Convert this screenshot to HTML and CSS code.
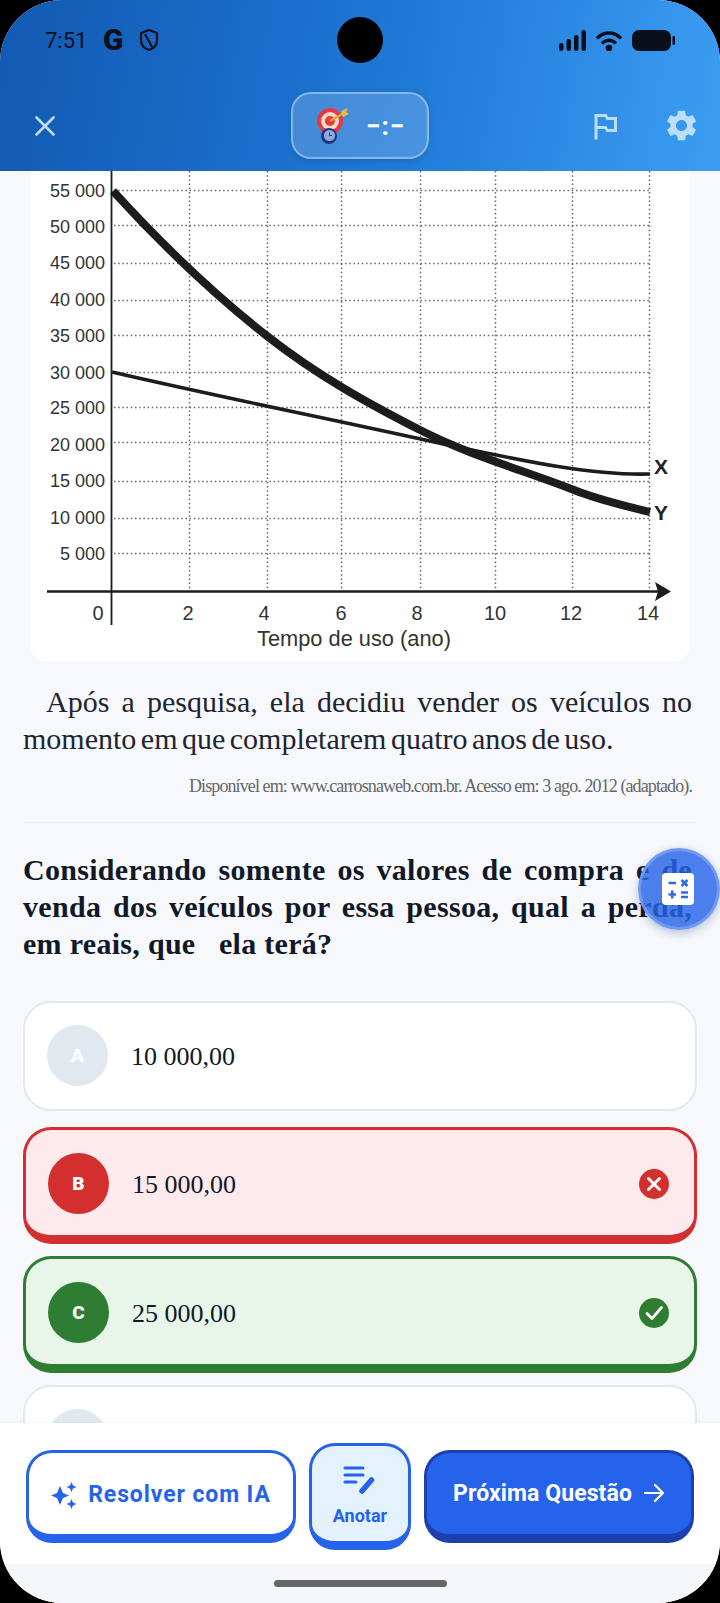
FILE: index.html
```html
<!DOCTYPE html>
<html lang="pt-BR">
<head>
  <meta charset="UTF-8">
  <meta name="viewport" content="width=device-width, initial-scale=1.0">
  <title>Questão</title>
  <link rel="stylesheet" href="styles.css">
</head>
<body>
  <div class="phone">
    <div class="punch-hole"></div>

    <header class="header">
      <div class="status-bar">
        <div class="status-left">
          <span class="time">7:51</span>
          <span class="g-logo">G</span>
          <svg class="shield" width="20" height="24" viewBox="0 0 20 24" fill="none" stroke="#0a0f1c" stroke-width="2.2" stroke-linejoin="round">
            <path d="M10 2 L18 5 V12 C18 17 14.5 20.5 10 22 C5.5 20.5 2 17 2 12 V5 Z"/>
            <path d="M6 6 L13 19"/>
          </svg>
        </div>
        <div class="status-right">
          <svg width="27" height="21" viewBox="0 0 27 21" fill="#0a0f1c">
            <rect x="0" y="13" width="4.5" height="8" rx="2.2"/>
            <rect x="7.5" y="9" width="4.5" height="12" rx="2.2"/>
            <rect x="15" y="5" width="4.5" height="16" rx="2.2"/>
            <rect x="22.5" y="0" width="4.5" height="21" rx="2.2"/>
          </svg>
          <svg width="26" height="21" viewBox="0 0 26 21" fill="none" stroke="#0a0f1c" stroke-width="3.4" stroke-linecap="round">
            <path d="M2 7.5 C8 1.5 18 1.5 24 7.5"/>
            <path d="M7 12.5 C10.5 9.5 15.5 9.5 19 12.5"/>
            <circle cx="13" cy="18" r="1.6" fill="#0a0f1c"/>
          </svg>
          <svg width="43" height="21" viewBox="0 0 43 21" fill="#0a0f1c">
            <rect x="0" y="0" width="39" height="21" rx="7"/>
            <rect x="40.5" y="6" width="2.5" height="9" rx="1.2"/>
          </svg>
        </div>
      </div>

      <div class="toolbar">
        <svg class="close-icon" width="20" height="20" viewBox="0 0 20 20" stroke="#bbdefb" stroke-width="2.6" stroke-linecap="round">
          <path d="M1.5 1.5 L18.5 18.5 M18.5 1.5 L1.5 18.5"/>
        </svg>
        <div class="timer-pill">
          <svg width="36" height="40" viewBox="0 0 36 40">
            <circle cx="15" cy="15" r="13" fill="#e53945"/>
            <circle cx="15" cy="15" r="9" fill="#f7dcc0"/>
            <circle cx="15" cy="15" r="5" fill="#e53945"/>
            <path d="M15 15 L29 7" stroke="#f0a030" stroke-width="2.4"/>
            <path d="M26 5 L33 2 L31 6 L34 8 L28 11 Z" fill="#f5b83d"/>
            <circle cx="14" cy="30" r="8" fill="#1d3a80"/>
            <circle cx="14.5" cy="29.5" r="5.6" fill="#8fa8e0"/>
            <path d="M14.5 26.5 V29.5 H17" fill="none" stroke="#1d3a80" stroke-width="1"/>
          </svg>
          <span class="timer-text">−:−</span>
        </div>
        <div class="toolbar-right">
          <svg width="36" height="36" viewBox="0 0 24 24" fill="#bbdefb">
            <path d="M14 6l-1-2H5v17h2v-7h5l1 2h7V6h-6zm4 8h-4l-1-2H7V6h5l1 2h5v6z"/>
          </svg>
          <svg width="37" height="37" viewBox="0 0 24 24" fill="#bbdefb">
            <path d="M19.14 12.94c.04-.3.06-.61.06-.94 0-.32-.02-.64-.07-.94l2.03-1.58a.49.49 0 0 0 .12-.61l-1.92-3.32a.488.488 0 0 0-.59-.22l-2.39.96c-.5-.38-1.03-.7-1.62-.94l-.36-2.54a.484.484 0 0 0-.48-.41h-3.84c-.24 0-.43.17-.47.41l-.36 2.54c-.59.24-1.13.57-1.62.94l-2.39-.96c-.22-.08-.47 0-.59.22L2.74 8.87c-.12.21-.08.47.12.61l2.03 1.58c-.05.3-.09.63-.09.94s.02.64.07.94l-2.03 1.58a.49.49 0 0 0-.12.61l1.92 3.32c.12.22.37.29.59.22l2.39-.96c.5.38 1.03.7 1.62.94l.36 2.54c.05.24.24.41.48.41h3.84c.24 0 .44-.17.47-.41l.36-2.54c.59-.24 1.13-.56 1.62-.94l2.39.96c.22.08.47 0 .59-.22l1.92-3.32c.12-.22.07-.47-.12-.61l-2.01-1.58zM12 15.6c-1.98 0-3.6-1.62-3.6-3.6s1.62-3.6 3.6-3.6 3.6 1.62 3.6 3.6-1.62 3.6-3.6 3.6z"/>
          </svg>
        </div>
      </div>
    </header>

    <main class="content">
      <div class="chart-card">
        <svg class="chart" width="660" height="490" viewBox="30 171 660 490">
          <g class="grid">
            <path d="M114 190.5H649 M114 225.5H649 M114 263.5H649 M114 300.5H649 M114 335.5H649 M114 372.5H649 M114 407.5H649 M114 442.5H649 M114 481.5H649 M114 518.5H649 M114 553.5H649"/>
            <path d="M189.5 171V590 M267.5 171V590 M341.5 171V590 M420.5 171V590 M495.5 171V590 M572.5 171V590 M649.5 171V590"/>
          </g>
          <path class="axis" d="M111.5 171V625"/>
          <path class="axis-x" d="M47 591.5H662"/>
          <path class="axis-head" d="M655 582 L671 591.5 L655 601 L658 591.5 Z"/>
          <path class="curve-x" d="M112 372 C 224 398,336 420,448 445 C 515 459,590 476,650 474"/>
          <path class="curve-y" d="M113 191 C 164 247,216 296,267 336 C 318 376,369 404,420 430 C 471 456,523 470,574 490 C 599 500,625 506,650 512"/>
          <g class="chart-y">
            <text x="105" y="196.500">55 000</text>
            <text x="105" y="233">50 000</text>
            <text x="105" y="268.500">45 000</text>
            <text x="105" y="305.500">40 000</text>
            <text x="105" y="342">35 000</text>
            <text x="105" y="379">30 000</text>
            <text x="105" y="414">25 000</text>
            <text x="105" y="450.500">20 000</text>
            <text x="105" y="487">15 000</text>
            <text x="105" y="524">10 000</text>
            <text x="105" y="559.500">5 000</text>
          </g>
          <g class="chart-x">
            <text x="98" y="620">0</text>
            <text x="188" y="620">2</text>
            <text x="264" y="620">4</text>
            <text x="341" y="620">6</text>
            <text x="417" y="620">8</text>
            <text x="495" y="620">10</text>
            <text x="571" y="620">12</text>
            <text x="648" y="620">14</text>
          </g>
          <text class="chart-title" x="354" y="646">Tempo de uso (ano)</text>
          <text class="chart-tag" x="654" y="474">X</text>
          <text class="chart-tag" x="654" y="520">Y</text>
        </svg>
      </div>

      <div class="text-block">
        <p class="paragraph">Após a pesquisa, ela decidiu vender os veículos no momento em que completarem quatro anos de uso.</p>
        <p class="source">Disponível em: www.carrosnaweb.com.br. Acesso em: 3 ago. 2012 (adaptado).</p>
      </div>

      <div class="divider"></div>

      <p class="question">Considerando somente os valores de compra e de venda dos veículos por essa pessoa, qual a perda, em reais, que&nbsp;&nbsp;&nbsp;ela terá?</p>

      <div class="options">
        <div class="option plain">
          <span class="letter">A</span>
          <span class="option-text">10 000,00</span>
        </div>
        <div class="option wrong">
          <span class="letter">B</span>
          <span class="option-text">15 000,00</span>
          <svg class="result-icon" width="30" height="30" viewBox="0 0 30 30">
            <circle cx="15" cy="15" r="15" fill="#d32f2f"/>
            <path d="M9.500 9.500 L20.500 20.500 M20.500 9.500 L9.500 20.500" stroke="#fff" stroke-width="3" stroke-linecap="round"/>
          </svg>
        </div>
        <div class="option right">
          <span class="letter">C</span>
          <span class="option-text">25 000,00</span>
          <svg class="result-icon" width="30" height="30" viewBox="0 0 30 30">
            <circle cx="15" cy="15" r="15" fill="#2e7d32"/>
            <path d="M8 15.500 L13 20.500 L22.500 9.500" fill="none" stroke="#fff" stroke-width="2.800" stroke-linecap="round" stroke-linejoin="round"/>
          </svg>
        </div>
        <div class="option plain">
          <span class="letter"></span>
        </div>
      </div>
    </main>

    <button class="calc-fab">
      <svg width="32" height="32" viewBox="0 0 32 32">
        <rect width="32" height="32" rx="4" fill="#fff"/>
        <path class="calc-glyph" d="M6.500 10H14 M19.500 7 L25.500 13 M25.500 7 L19.500 13 M10.250 17.500V25.500 M6.500 21.500H14 M19 19.500H26 M19 24H26"/>
      </svg>
    </button>

    <div class="bottom-bar">
      <button class="btn btn-ai">
        <svg width="26" height="28" viewBox="0 0 26 28" fill="#2563eb">
          <path d="M9 5 L12 12 L18 14.500 L12 17 L9 24 L6 17 L0 14.500 L6 12 Z"/>
          <path d="M20.500 1 L22 4.500 L25.500 6 L22 7.500 L20.500 11 L19 7.500 L15.500 6 L19 4.500 Z"/>
          <path d="M20.500 18 L22 21.500 L25.500 23 L22 24.500 L20.500 28 L19 24.500 L15.500 23 L19 21.500 Z"/>
        </svg>
        Resolver com IA
      </button>
      <button class="btn btn-note">
        <svg width="34" height="32" viewBox="0 0 34 32" fill="none" stroke="#2563eb" stroke-linecap="round">
          <path d="M2 3H20 M2 10H20 M2 17H13" stroke-width="3"/>
          <path d="M19 26 L28.500 15" stroke-width="5.500"/>
        </svg>
        <span>Anotar</span>
      </button>
      <button class="btn btn-next">
        Próxima Questão
        <svg width="22" height="22" viewBox="0 0 22 22" fill="none" stroke="#fff" stroke-width="2.200" stroke-linecap="round" stroke-linejoin="round">
          <path d="M2 11H20 M12 3 L20 11 L12 19"/>
        </svg>
      </button>
    </div>

    <div class="nav-strip">
      <div class="home-bar"></div>
    </div>
  </div>
</body>
</html>
```

FILE: styles.css
```css
* {
  margin: 0;
  padding: 0;
  box-sizing: border-box;
}

body {
  background: #000;
  width: 720px;
  height: 1603px;
  overflow: hidden;
  font-family: 'Liberation Serif', serif;
}

.phone {
  position: relative;
  width: 720px;
  height: 1603px;
  background: #f6f8fc;
  border-radius: 62px;
  overflow: hidden;
  display: flex;
  flex-direction: column;
}

.punch-hole {
  position: absolute;
  left: 337px;
  top: 17px;
  width: 46px;
  height: 46px;
  border-radius: 50%;
  background: #000;
  z-index: 3;
}

.header {
  height: 171px;
  flex-shrink: 0;
  background: linear-gradient(100deg, #1259b2 0%, #1f78d6 55%, #3c9df2 100%);
}

.status-bar {
  height: 80px;
  padding: 0 45px;
  display: flex;
  justify-content: space-between;
  align-items: center;
  color: #0a0f1c;
}

.status-left {
  display: flex;
  align-items: center;
}

.time {
  font-family: 'Roboto', sans-serif;
  font-size: 22px;
  width: 58px;
}

.g-logo {
  font-family: 'Roboto', sans-serif;
  font-weight: 900;
  font-size: 30px;
  line-height: 1;
  width: 36px;
}

.status-right {
  display: flex;
  align-items: center;
  gap: 10px;
}

.toolbar {
  height: 91px;
  padding: 0 20px;
  display: grid;
  grid-template-columns: 1fr auto 1fr;
  align-items: center;
}

.close-icon {
  margin-left: 15px;
}

.toolbar-right {
  display: flex;
  justify-content: flex-end;
  align-items: center;
  gap: 40px;
}

.timer-pill {
  width: 138px;
  height: 67px;
  display: flex;
  align-items: center;
  gap: 15px;
  padding-left: 22px;
  border: 2px solid rgba(255, 255, 255, 0.35);
  border-radius: 20px;
  background: rgba(255, 255, 255, 0.18);
  box-shadow: 0 2px 6px rgba(0, 0, 0, 0.12);
}

.timer-text {
  font-family: 'Roboto', sans-serif;
  font-weight: 700;
  font-size: 26px;
  letter-spacing: 1px;
  color: #fff;
}

.content {
  flex: 1;
  overflow: hidden;
}

.chart-card {
  width: 660px;
  height: 490px;
  margin: 0 30px;
  background: #fff;
  border-radius: 0 0 16px 16px;
}

.chart {
  display: block;
}

.grid path {
  fill: none;
  stroke: #666;
  stroke-width: 1.5;
  stroke-dasharray: 1.5 2.7;
}

.axis, .axis-x {
  fill: none;
  stroke: #1c1c1c;
}

.axis { stroke-width: 1.8; }
.axis-x { stroke-width: 2.4; }
.axis-head { fill: #1c1c1c; }

.curve-x, .curve-y {
  fill: none;
  stroke: #1c1c1c;
}

.curve-x { stroke-width: 3.6; }
.curve-y { stroke-width: 8; }

.chart text {
  font-family: 'Liberation Sans', sans-serif;
  fill: #333;
}

.chart-y text {
  font-size: 18px;
  text-anchor: end;
}

.chart-x text {
  font-size: 20px;
  text-anchor: middle;
}

.chart .chart-title {
  font-size: 21.800px;
  text-anchor: middle;
}

.chart .chart-tag {
  font-size: 21px;
  font-weight: 700;
  fill: #222;
}

.text-block {
  padding: 22px 28px 0 23px;
}

.paragraph {
  font-size: 30px;
  line-height: 37px;
  word-spacing: -3px;
  color: #1f2430;
  text-align: justify;
  text-indent: 23px;
}

.source {
  margin-top: 18px;
  font-size: 18px;
  letter-spacing: -0.9px;
  line-height: 22px;
  color: #666;
  text-align: right;
}

.divider {
  height: 1px;
  margin: 25px 23px 0;
  background: #eceff4;
}

.question {
  margin-top: 28px;
  padding: 0 28px 0 23px;
  font-size: 30px;
  font-weight: 700;
  letter-spacing: 0.3px;
  line-height: 37px;
  color: #111827;
  text-align: justify;
}

.options {
  margin: 39px 23px 0;
}

.option {
  display: flex;
  align-items: center;
  gap: 23px;
  margin-bottom: 12px;
  border-radius: 28px;
}

.option.plain {
  height: 110px;
  padding: 22px 25px 23px 22px;
  margin-bottom: 16px;
  background: #fff;
  border: 2px solid #e2e8f0;
}

.option.wrong, .option.right {
  height: 117px;
  padding: 23px 25px 21px 22px;
  border-style: solid;
  border-width: 3px 3px 9px;
}

.option.wrong {
  background: #feeaec;
  border-color: #d32f2f;
}

.option.right {
  background: #e8f5e9;
  border-color: #2e7d32;
}

.letter {
  width: 61px;
  height: 61px;
  flex-shrink: 0;
  display: flex;
  align-items: center;
  justify-content: center;
  border-radius: 50%;
  background: #e2e8f0;
  font-family: 'Roboto', sans-serif;
  font-weight: 900;
  font-size: 19px;
  color: #fff;
}

.wrong .letter { background: #d32f2f; }
.right .letter { background: #2e7d32; }

.option-text {
  font-size: 26px;
  color: #111827;
  padding-top: 3px;
}

.result-icon {
  margin-left: auto;
}

.calc-fab {
  position: absolute;
  left: 638px;
  top: 848px;
  width: 82px;
  height: 82px;
  display: flex;
  align-items: center;
  justify-content: center;
  padding-right: 2px;
  border: 3px solid rgba(120, 160, 245, 0.8);
  border-radius: 50%;
  background: rgba(38, 99, 232, 0.82);
  box-shadow: 0 3px 10px rgba(30, 60, 130, 0.3);
}

.calc-glyph {
  fill: none;
  stroke: #2f6be8;
  stroke-width: 2.6;
}

.bottom-bar {
  height: 141px;
  flex-shrink: 0;
  padding: 5px 26px 0;
  display: flex;
  align-items: center;
  gap: 13px;
  background: #fff;
  box-shadow: 0 -1px 3px rgba(0, 0, 0, 0.04);
  z-index: 1;
}

.btn {
  display: flex;
  align-items: center;
  justify-content: center;
  font-family: 'Roboto', sans-serif;
  font-weight: 700;
  font-size: 23px;
  border-style: solid;
  border-width: 3px 3px 9px;
  border-radius: 26px;
}

.btn-ai, .btn-next {
  width: 270px;
  height: 93px;
}

.btn-ai {
  gap: 11px;
  padding-top: 3px;
  letter-spacing: 0.9px;
  color: #2563eb;
  background: #fff;
  border-color: #2563eb;
}

.btn-note {
  width: 102px;
  height: 107px;
  flex-direction: column;
  gap: 8px;
  padding-top: 4px;
  font-size: 18px;
  color: #2563eb;
  background: #e3f2fd;
  border-color: #2563eb;
}

.btn-next {
  gap: 11px;
  letter-spacing: 0.1px;
  color: #fff;
  background: #2563eb;
  border-color: #1e40af;
}

.nav-strip {
  height: 39px;
  flex-shrink: 0;
  display: flex;
  align-items: center;
  justify-content: center;
  background: #f5f7fa;
}

.home-bar {
  width: 173px;
  height: 7px;
  border-radius: 4px;
  background: #666;
}
```
